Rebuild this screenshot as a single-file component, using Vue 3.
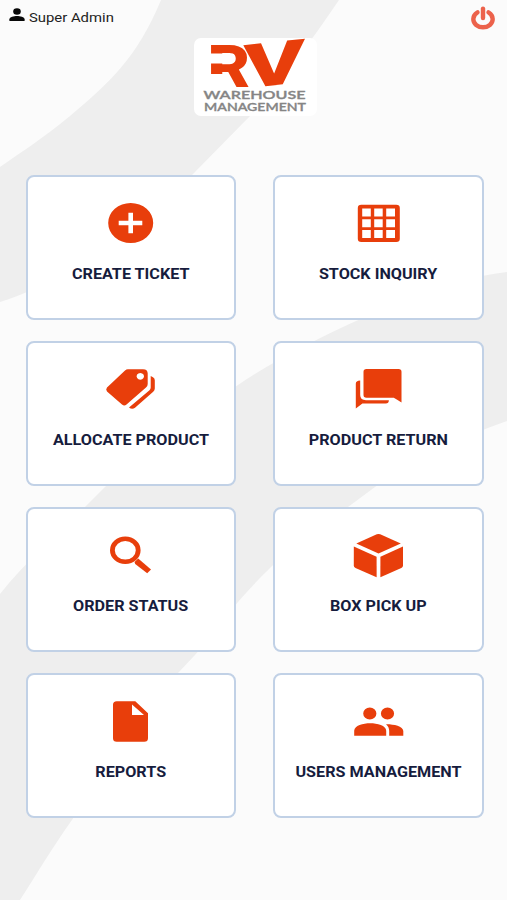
<template>
  <div class="dashboard">
    <svg class="backdrop" viewBox="0 0 507 900" preserveAspectRatio="none" aria-hidden="true">
      <path d="M161 0C137 58 110 82 70 116C42 139 20 153 0 167V302C20 296 46 284 72 270C118 244 160 208 195 172L250 116C285 76 310 43 339 0Z" />
      <path d="M507 272C460 277 400 299 365 317C320 337 275 360 238 385C190 416 145 450 105 487L85 507C60 532 25 562 0 594V900H20C38 872 52 848 72 820C105 768 140 715 178 673L195 655C220 628 225 612 272 566C300 541 320 525 348 507L375 487C410 464 455 439 507 421Z" />
    </svg>

    <header class="topbar">
      <div class="user">
        <svg class="user-icon" viewBox="0 0 16 14" aria-hidden="true">
          <ellipse cx="8" cy="3.5" rx="3.8" ry="3.3" />
          <path d="M.4 13V11.2C.4 8.9 5 7.9 8 7.9s7.6 1 7.6 3.3V13z" />
        </svg>
        <span class="user-name">Super Admin</span>
      </div>
      <button class="power" title="Log out">
        <svg viewBox="0 0 26 26" aria-hidden="true">
          <path d="M7.5 7.4C4.9 8.9 3.3 11.2 3.3 14c0 4.8 4.4 8.3 9.7 8.3s9.7-3.5 9.7-8.3c0-2.8-1.6-5.1-4.2-6.6" />
          <path d="M13 3.6V13" />
        </svg>
      </button>
    </header>

    <div class="logo">
      <svg viewBox="0 0 123 78" role="img">
        <g class="logo-mark">
          <text transform="translate(13.5 48.5) scale(1.11 1)" font-size="59">R</text>
          <rect class="logo-cut" x="16" y="15.5" width="19" height="10" />
          <rect class="logo-cut" x="16" y="36" width="15" height="14" />
          <text transform="translate(49.5 50.5) skewY(-6) scale(1.52 1)" font-size="61">V</text>
        </g>
        <text class="logo-text" x="9.5" y="60.5" textLength="102" lengthAdjust="spacingAndGlyphs">WAREHOUSE</text>
        <text class="logo-text" x="10" y="72.8" textLength="102" lengthAdjust="spacingAndGlyphs">MANAGEMENT</text>
      </svg>
    </div>

    <main class="menu">
      <button v-for="item in items" :key="item.label" class="card">
        <svg class="card-icon" viewBox="0 0 54 48" aria-hidden="true">
          <path v-for="d in item.paths" :key="d" :d="d" fill-rule="evenodd" />
        </svg>
        <span class="card-label">{{ item.label }}</span>
      </button>
    </main>
  </div>
</template>

<script setup>
const items = [
  {
    label: 'CREATE TICKET',
    paths: ['M4.2 24a22.5 20 0 1 0 45 0a22.5 20 0 1 0 -45 0zM24.4 13.7h4.6v8h9.3v4.6H29v8h-4.6v-8h-9.7v-4.6h9.7z'],
  },
  {
    label: 'STOCK INQUIRY',
    paths: ['M9.3 5.7H44.3Q47.8 5.7 47.8 9V39.7Q47.8 43 44.3 43H9.3Q5.8 43 5.8 39.7V9Q5.8 5.7 9.3 5.7zM10.2 9.4v8h8.6v-8zM22.2 9.4v8h8.5v-8zM34.2 9.4v8H43v-8zM10.2 20.2v8h8.6v-8zM22.2 20.2v8h8.5v-8zM34.2 20.2v8H43v-8zM10.2 31v8h8.6v-8zM22.2 31v8h8.5v-8zM34.2 31v8H43v-8z'],
  },
  {
    label: 'ALLOCATE PRODUCT',
    paths: [
      'M24 4.2H39Q43.7 4.2 43.7 8.5V19Q43.7 21 42 22.6L22.5 39.6Q20.3 41.4 18 39.6L3 26.4Q1.4 24.6 3 22.6L21 5.6Q22.3 4.2 24 4.2zM36.3 7.9a3.7 3.4 0 1 0 .01 0z',
      'M46.7 11L49 12.2Q50.8 13.2 50.8 15.2V23.5Q50.8 25.2 49.2 26.8L31 42.8Q28 45 25 42.5L45.5 25.2Q46.7 24 46.7 22.5z',
    ],
  },
  {
    label: 'PRODUCT RETURN',
    paths: [
      'M14.5 4H46.5Q49.5 4 49.5 6.8V37.5Q46.5 35.6 41.8 32.8H14.5Q11.5 32.8 11.5 30V6.8Q11.5 4 14.5 4z',
      'M8.2 15.6V30Q8.2 35.2 14 35.2H36.9Q36.7 38.4 33.8 38.4H10.4L3.8 43.5V18.8Q3.8 15.8 8.2 15.6z',
    ],
  },
  {
    label: 'ORDER STATUS',
    paths: [
      'M6 19.3a15.3 13.7 0 1 0 30.6 0a15.3 13.7 0 1 0 -30.6 0zM10.8 19.3a10.5 9.3 0 1 1 21 0a10.5 9.3 0 1 1 -21 0z',
      'M30.5 31L34.2 27.6L47 38.4L43.2 42.3L31.2 33z',
    ],
  },
  {
    label: 'BOX PICK UP',
    paths: [
      'M24.8 3.3Q26.5 2.6 28.2 3.3L48.8 12.6L26.5 22.6L4.3 12.6z',
      'M1.8 15.6L24.6 25.8V46.2L3.5 37Q1.8 36 1.8 34.5z',
      'M51 15.6L28.4 25.8V46.2L49.3 37Q51 36 51 34.5z',
    ],
  },
  {
    label: 'REPORTS',
    paths: ['M12.8 4.3H31.3L44 16.2V41.2Q44 44.7 40.2 44.7H12.8Q9 44.7 9 41.2V7.8Q9 4.3 12.8 4.3zM28 7.6V18.1H40z'],
  },
  {
    label: 'USERS MANAGEMENT',
    paths: [
      'M11.2 16.4a6.6 6 0 1 0 13.2 0a6.6 6 0 1 0 -13.2 0zM28.9 16.4a6.6 6 0 1 0 13.2 0a6.6 6 0 1 0 -13.2 0z',
      'M2.2 38.8V33.8C2.2 28.4 11.2 26.2 18.2 26.2s16 2.2 16 7.6V38.8z',
      'M34 27.2C40.5 27 51.3 28.9 51.3 34V38.8H37.2V34Q37.2 30 34 27.2z',
    ],
  },
]
</script>

<style>
body {
  margin: 0;
  background: #fbfbfb;
}
</style>

<style scoped>
.dashboard {
  position: relative;
  height: 900px;
  overflow: hidden;
  background: #fbfbfb;
  font-family: Roboto, "Liberation Sans", sans-serif;
}

.backdrop {
  position: absolute;
  inset: 0;
  width: 100%;
  height: 100%;
  fill: #eeeeee;
}

.topbar {
  position: relative;
  display: flex;
  justify-content: space-between;
  height: 38px;
  padding: 0 11px 0 8.5px;
}

.user {
  display: flex;
  align-items: flex-start;
}

.user-icon {
  width: 16px;
  height: 14px;
  margin-top: 7.5px;
  fill: #080808;
}

.user-name {
  margin: 8px 0 0 4.5px;
  font-size: 13.5px;
  line-height: 18px;
  color: #222;
  transform: scaleX(1.1);
  transform-origin: left;
}

button {
  border: none;
  padding: 0;
  font-family: inherit;
  cursor: pointer;
}

.power {
  width: 26px;
  height: 26px;
  margin-top: 5px;
  background: none;
}

.power svg {
  display: block;
  fill: none;
  stroke: #ec624b;
  stroke-width: 4.4;
  stroke-linecap: round;
}

.logo {
  position: relative;
  width: 123px;
  height: 78px;
  margin-left: 194px;
  border-radius: 7px;
  background: #fff;
}

.logo svg {
  display: block;
  overflow: visible;
}

.logo-mark {
  fill: #e83e0b;
  font-weight: 900;
}

.logo-cut {
  fill: #fff;
}

.logo-text {
  font-family: Lato, sans-serif;
  font-size: 12px;
  font-weight: 600;
  fill: #858585;
  stroke: #858585;
  stroke-width: 0.35;
}

.menu {
  position: relative;
  display: grid;
  grid-template-columns: 210px 211px;
  grid-auto-rows: 145px;
  gap: 21px 37px;
  margin: 59px 0 0 26px;
}

.card {
  display: flex;
  flex-direction: column;
  align-items: center;
  box-sizing: border-box;
  padding-top: 22px;
  border: 2px solid #c1d1e6;
  border-radius: 8px;
  background: #fff;
}

.card-icon {
  width: 54px;
  height: 48px;
  fill: #e83e0b;
}

.card-label {
  margin-top: 18px;
  font-size: 14.5px;
  font-weight: 700;
  line-height: 20px;
  white-space: nowrap;
  color: #161c3d;
  transform: scaleX(1.115);
}
</style>
